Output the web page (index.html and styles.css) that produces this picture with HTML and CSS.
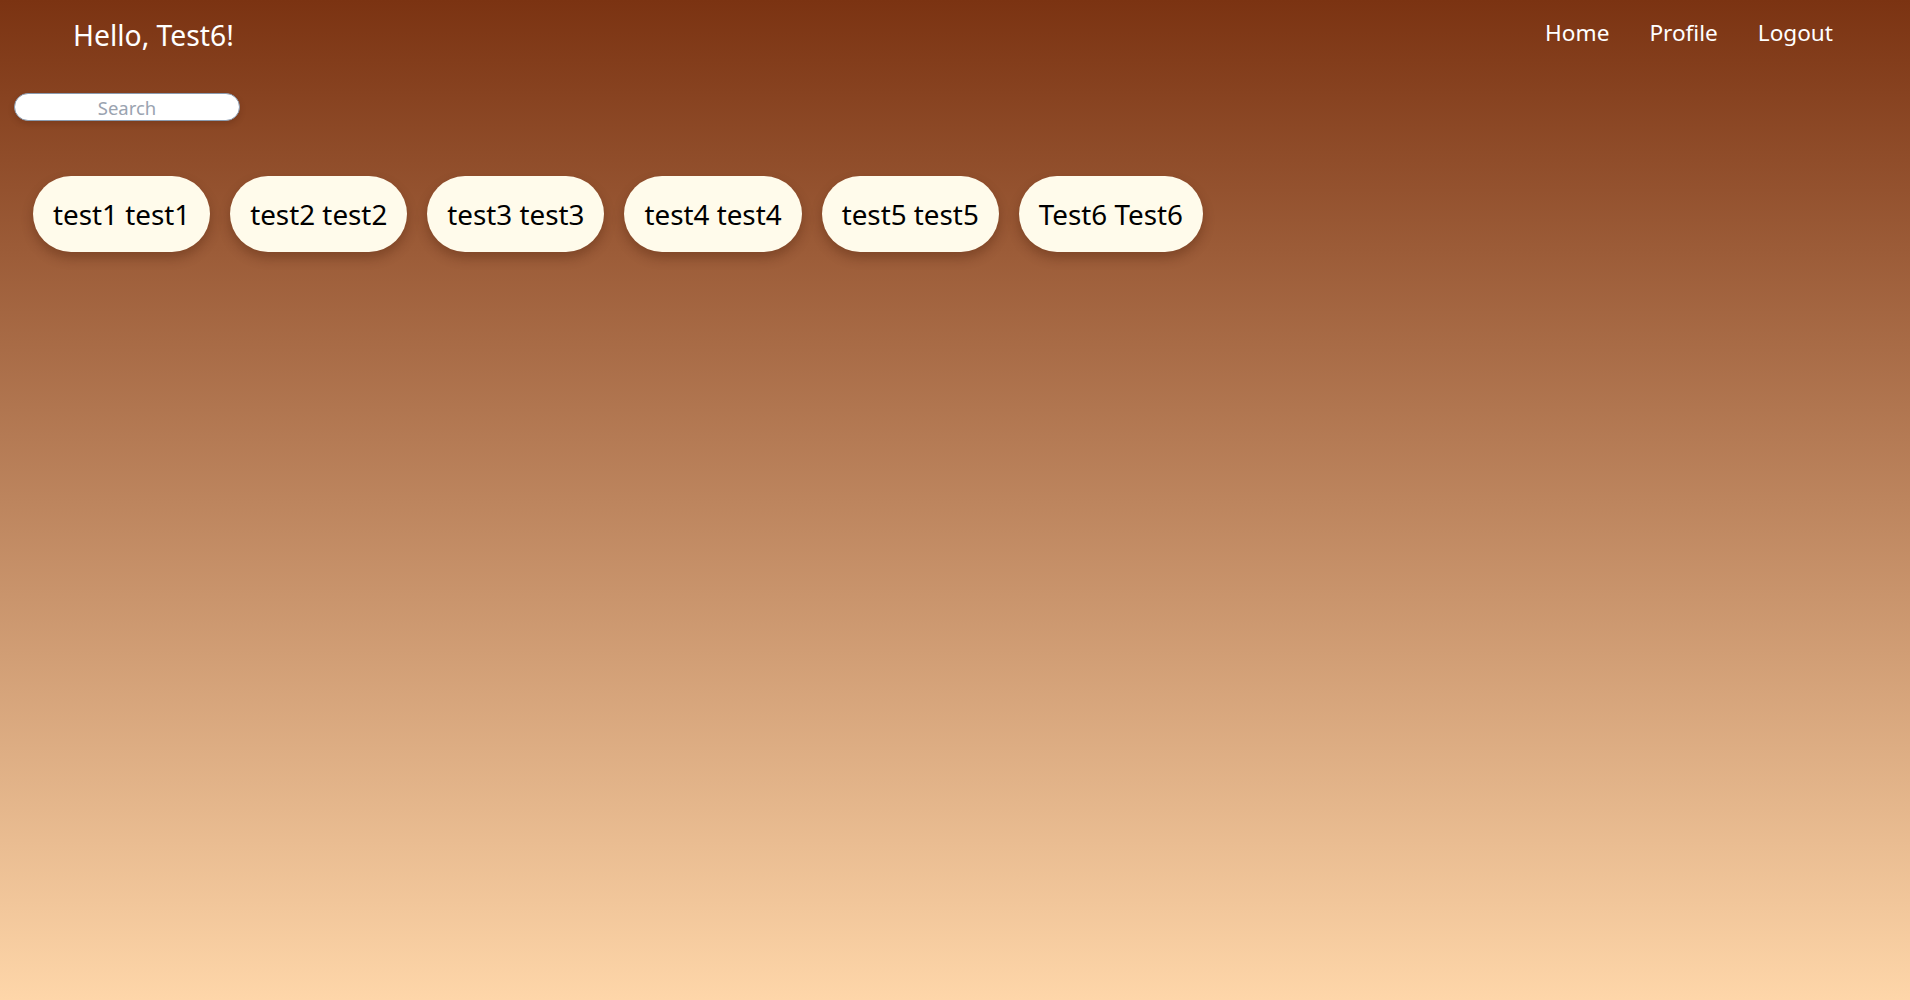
FILE: index.html
```html
<!DOCTYPE html>
<html lang="en">
<head>
<meta charset="utf-8">
<title>Home</title>
<link rel="stylesheet" href="styles.css">
</head>
<body>
<div class="page">
  <header class="topbar">
    <div class="greeting">Hello, Test6!</div>
    <nav class="nav">
      <a class="nav-link" href="#">Home</a>
      <a class="nav-link" href="#">Profile</a>
      <a class="nav-link" href="#">Logout</a>
    </nav>
  </header>
  <div class="search-row">
    <input class="search" type="text" placeholder="Search">
  </div>
  <ul class="users">
    <li class="user">test1 test1</li>
    <li class="user">test2 test2</li>
    <li class="user">test3 test3</li>
    <li class="user">test4 test4</li>
    <li class="user">test5 test5</li>
    <li class="user">Test6 Test6</li>
  </ul>
</div>
</body>
</html>
```

FILE: styles.css
```css
html, body {
  margin: 0;
  padding: 0;
}
body {
  font-family: "Noto Sans", "Open Sans", sans-serif;
  background: linear-gradient(to bottom, #7b3312 0%, #fed6a9 100%);
  min-height: 100vh;
}
.page {
  min-height: 100vh;
  display: flex;
  flex-direction: column;
}
.topbar {
  display: flex;
  justify-content: space-between;
  align-items: center;
  padding: 14px 77px 0 73px;
  height: 42px;
}
.greeting {
  color: #ffffff;
  font-size: 28.3px;
  line-height: 42px;
}
.nav {
  display: flex;
  gap: 40px;
  margin-top: -5px;
}
.nav-link {
  color: #ffffff;
  text-decoration: none;
  font-size: 22.6px;
  line-height: 42px;
}
.search-row {
  padding: 37px 0 0 14px;
}
.search {
  box-sizing: border-box;
  width: 226px;
  height: 28px;
  border: 1px solid #8a9bb0;
  border-radius: 14px;
  background: #ffffff;
  text-align: center;
  font-family: "Noto Sans", "Open Sans", sans-serif;
  font-size: 18.5px;
  padding: 0 10px;
  box-shadow: 0 3px 6px rgba(60, 20, 0, 0.2);
  outline: none;
}
.search::placeholder {
  color: #9aa3b0;
}
.users {
  list-style: none;
  margin: 0;
  padding: 55px 0 0 33px;
  display: flex;
  gap: 20px;
}
.user {
  background: #fffbeb;
  color: #000000;
  font-size: 27.8px;
  line-height: 40px;
  padding: 18px 20px;
  border-radius: 38px;
  box-shadow: 0 6px 12px rgba(60, 20, 0, 0.3);
}
```
